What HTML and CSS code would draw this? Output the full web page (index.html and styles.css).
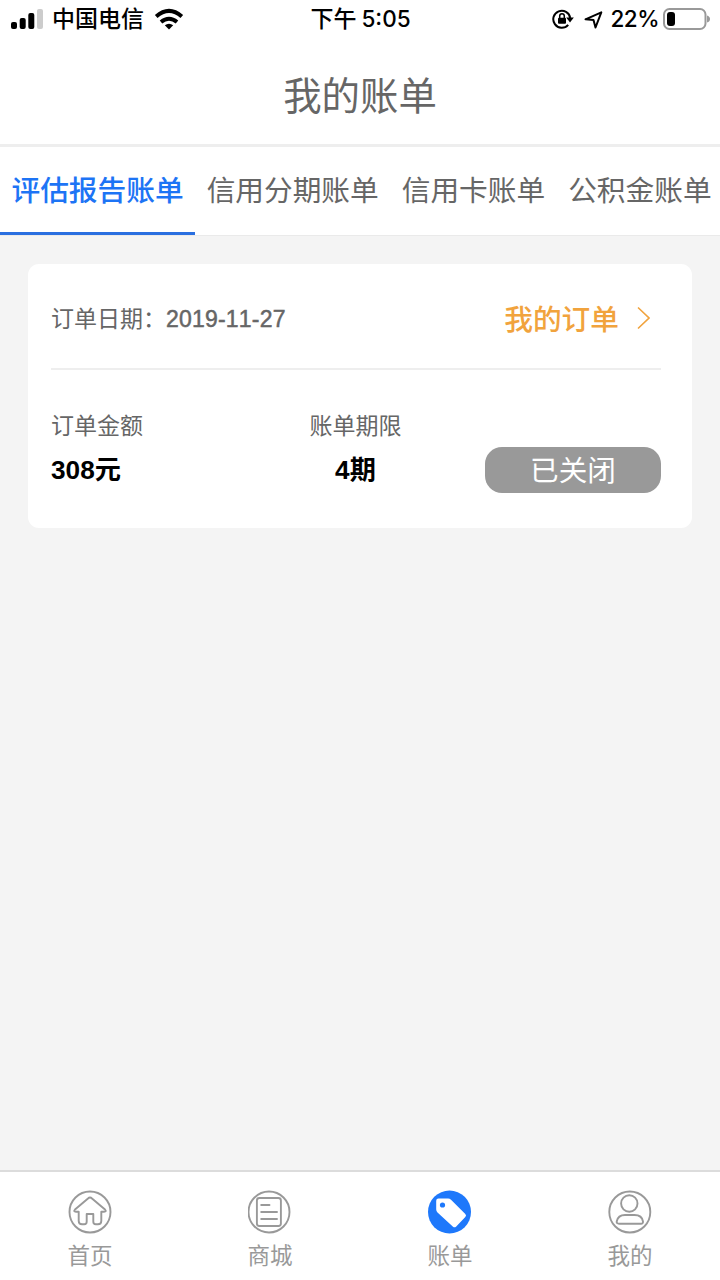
FILE: index.html
```html
<!DOCTYPE html>
<html lang="zh-CN">
<head>
<meta charset="utf-8">
<title>我的账单</title>
<link rel="stylesheet" href="styles.css">
</head>
<body>
<div class="app">
  <div class="status">
    <div class="status-left">
      <svg class="signal" width="32" height="20" viewBox="0 0 32 20"><rect x="0" y="13" width="6" height="7" rx="2"/><rect x="8.7" y="9" width="6" height="11" rx="2"/><rect x="17.3" y="4" width="6" height="16" rx="2"/><rect x="26" y="0" width="6" height="20" rx="2" fill="#ccc"/></svg>
      <span class="carrier">中国电信</span>
      <svg class="wifi" width="30" height="22" viewBox="0 0 30 22"><g fill="none" stroke="#000" stroke-width="4"><path d="M2.200 8.600Q15-2.800 27.800 8.600"/><path d="M7 14Q15 7.500 23 14"/></g><path d="M10.800 17.300Q15 14 19.200 17.300L15 21.500Z"/></svg>
    </div>
    <div class="status-time"><span>下午</span><span class="digits">5:05</span></div>
    <div class="status-right">
      <svg class="lock" width="22" height="20" viewBox="0 0 22 20"><path d="M16.200 15.800A8.500 8.500 0 1 1 18.200 9" fill="none" stroke="#000" stroke-width="2"/><path d="M14.200 8.500h7.600l-3.800 5z"/><rect x="6" y="8.700" width="8" height="6" rx="1"/><path d="M7.700 9V7a2.300 2.300 0 0 1 4.600 0v2" fill="none" stroke="#000" stroke-width="1.500"/></svg>
      <svg class="locate" width="19" height="18" viewBox="0 0 19 18"><path d="M1.500 8.300L17.300 1.300L11.500 16.500L9.500 9Z" fill="none" stroke="#000" stroke-width="2" stroke-linejoin="round"/></svg>
      <span class="digits percent">22%</span>
      <svg class="battery" width="47" height="22" viewBox="0 0 47 22"><rect x="1" y="1" width="41.500" height="20" rx="5.500" fill="none" stroke="#999" stroke-width="2"/><rect x="4" y="4" width="8" height="14" rx="3"/><path d="M44 7.500q3 1 3 3.500t-3 3.500z" fill="#999"/></svg>
    </div>
  </div>
  <header class="title">我的账单</header>
  <nav class="tabs">
    <a class="tab tab-active">评估报告账单</a>
    <a class="tab">信用分期账单</a>
    <a class="tab">信用卡账单</a>
    <a class="tab">公积金账单</a>
  </nav>
  <main class="content">
    <section class="card">
      <div class="card-head">
        <span class="date">订单日期：<span class="date-value">2019-11-27</span></span>
        <a class="order-link">我的订单
          <svg class="chevron" width="13" height="24" viewBox="0 0 13 24"><path d="M1 1.500L12 12L1 22.500" fill="none" stroke="#f1a33d" stroke-width="1.600"/></svg>
        </a>
      </div>
      <div class="card-body">
        <div class="amount"><div class="label">订单金额</div><div class="value">308元</div></div>
        <div class="period"><div class="label">账单期限</div><div class="value">4期</div></div>
        <span class="closed">已关闭</span>
      </div>
    </section>
  </main>
  <footer class="tabbar">
    <a class="item">
      <svg class="icon" width="44" height="44" viewBox="0 0 44 44"><circle cx="22" cy="22" r="20.500"/><path d="M22 7.500Q23 7.500 24 8.500L37 19.500Q39 21.800 36 21.800H33.300V31Q33.300 34.300 30 34.300H27.800Q25.300 34.300 25.300 31.500V24H18.700V31.500Q18.700 34.300 16.200 34.300H14Q10.700 34.300 10.700 31V21.800H8Q5 21.800 7 19.500L20 8.500Q21 7.500 22 7.500Z"/></svg>
      <span>首页</span>
    </a>
    <a class="item">
      <svg class="icon" width="44" height="44" viewBox="0 0 44 44"><circle cx="21" cy="22" r="20.500"/><rect x="8.900" y="8" width="24" height="28" rx="2.500"/><path d="M13.200 15H21.500M13.200 22H29M13.200 29H29"/></svg>
      <span>商城</span>
    </a>
    <a class="item">
      <svg class="icon icon-active" width="44" height="44" viewBox="0 0 44 44"><circle cx="21.500" cy="22" r="21.500"/><path class="tag" d="M10.500 8.500H20Q21.800 8.500 23 9.700L37.300 24Q38.800 25.500 37.300 27L28 36.700Q26.500 38 25 36.700L9.500 22.500Q8.200 21.200 8.200 19.500V10.800Q8.200 8.500 10.500 8.500Z"/><circle cx="14.500" cy="15" r="2.600"/></svg>
      <span>账单</span>
    </a>
    <a class="item">
      <svg class="icon" width="44" height="44" viewBox="0 0 44 44"><circle cx="21.800" cy="22" r="20.500"/><circle cx="21.300" cy="13.500" r="8.200"/><path d="M8.700 31.500Q10 25 17 25H26.500Q34 25 35 31.500Q35.200 33.700 33 33.700H11Q8.500 33.700 8.700 31.500Z"/></svg>
      <span>我的</span>
    </a>
  </footer>
</div>
</body>
</html>
```
FILE: styles.css
```css
* { box-sizing: border-box; }
body {
  margin: 0;
  font-family: "Liberation Sans", "Noto Sans CJK SC", sans-serif;
  color: #666;
  background: #f4f4f4;
}
svg { display: block; flex: none; }
.app { width: 720px; height: 1280px; display: flex; flex-direction: column; overflow: hidden; }
.status {
  height: 40px;
  display: grid;
  grid-template-columns: 1fr auto 1fr;
  padding: 0 10px 2px 11px;
  background: #fff;
  color: #000;
  font-family: Inter, "Noto Sans CJK SC", sans-serif;
  font-size: 23px;
  font-weight: 500;
  line-height: 38px;
}
.status-left, .status-time, .status-right { display: flex; align-items: center; white-space: nowrap; }
.signal { margin-right: 9px; }
.wifi { margin-left: 10px; }
.status-time { gap: 5px; }
.digits { font-size: 22.500px; }
.percent { letter-spacing: -0.500px; }
.status-right { justify-content: flex-end; }
.lock { margin-right: 10px; }
.locate { margin: 2px 7px 0 0; }
.battery { margin-left: 4px; }
.title {
  height: 107px;
  padding-top: 28px;
  background: #fff;
  border-bottom: 3px solid #eee;
  text-align: center;
  font-size: 38.400px;
  line-height: 58px;
}
.tabs { height: 89px; flex: none; display: flex; background: #fff; border-bottom: 1px solid #eaeaea; }
.tab {
  flex: none;
  height: 88px;
  padding: 0 11.500px;
  font-size: 28.700px;
  line-height: 88px;
  white-space: nowrap;
}
.tab-active { color: #1d74f5; font-weight: 500; border-bottom: 3px solid #2a6fe0; }
.content { flex: 1; padding: 28px; }
.card { height: 264px; padding: 0 31px 0 23px; border-radius: 11px; background: #fff; }
.card-head {
  height: 106px;
  display: flex;
  align-items: center;
  justify-content: space-between;
  border-bottom: 2px solid #eee;
}
.date { font-size: 23px; line-height: 34px; padding-top: 6px; }
.date-value { font-kerning: none; letter-spacing: 0.200px; -webkit-text-stroke: 0.500px #666; }
.order-link {
  display: flex;
  align-items: center;
  gap: 18px;
  padding: 3px 11px 0 0;
  color: #f1a33d;
  font-size: 28.700px;
  font-weight: 500;
}
.card-body {
  display: grid;
  grid-template-columns: 216px 177px 176px;
  justify-content: space-between;
  padding-top: 39px;
}
.label { font-size: 23px; line-height: 34px; }
.value { margin-top: 8px; color: #000; font-size: 26.200px; font-weight: 700; line-height: 38px; }
.period { text-align: center; padding-right: 41px; }
.closed {
  height: 46px;
  margin-top: 38px;
  border-radius: 17px;
  background: #999;
  color: #fff;
  font-size: 28.600px;
  line-height: 48px;
  text-align: center;
}
.tabbar {
  height: 110px;
  flex: none;
  display: grid;
  grid-template-columns: repeat(4, 1fr);
  padding-top: 18px;
  border-top: 2px solid #dcdcdc;
  background: #fff;
}
.item {
  display: flex;
  flex-direction: column;
  align-items: center;
  color: #999;
  font-size: 22.500px;
  line-height: 45px;
}
.icon { fill: none; stroke: #999; stroke-width: 1.900; stroke-linejoin: round; stroke-linecap: round; }
.icon-active { fill: #1e78fb; stroke: none; }
.tag { fill: #fff; }
```
